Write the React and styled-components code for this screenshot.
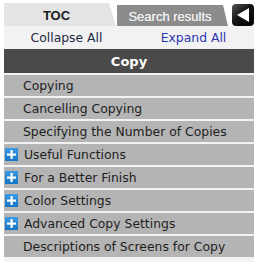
import React from "react";
import styled, { createGlobalStyle } from "styled-components";

const Global = createGlobalStyle`
  html, body { margin: 0; padding: 0; background: #ffffff; }
  body { font-family: "DejaVu Sans", Verdana, sans-serif; }
`;

const Panel = styled.div`
  width: 250px;
  margin: 3px 4px 0 4px;
  display: flex;
  flex-direction: column;
  background: #f3f3f3;
  padding-bottom: 6px;
`;

const TabBar = styled.div`
  display: flex;
  align-items: flex-end;
  height: 23px;
  background: #ffffff;
`;

const Tab = styled.div`
  height: ${(p) => (p.$active ? "23px" : "21px")};
  width: ${(p) => p.$width}px;
  margin-right: ${(p) => p.$gap || 0}px;
  display: flex;
  align-items: center;
  justify-content: center;
  box-sizing: border-box;
  padding-right: ${(p) => p.$slant}px;
  padding-top: 1px;
  background: ${(p) => (p.$active ? "#e4e4e4" : "#8c8c8c")};
  color: ${(p) => (p.$active ? "#1a1a1a" : "#f0f0f0")};
  font-family: "Liberation Sans", Arial, sans-serif;
  font-size: 13px;
  font-weight: ${(p) => (p.$active ? 700 : 400)};
  text-shadow: ${(p) => (p.$active ? "none" : "0 0 0.4px #f0f0f0")};
  clip-path: polygon(0 0, calc(100% - ${(p) => p.$slant}px) 0, 100% 100%, 0 100%);
`;

const BackButton = styled.button`
  margin-left: auto;
  align-self: center;
  width: 22px;
  height: 22px;
  border: none;
  padding: 0;
  border-radius: 4px;
  background: linear-gradient(135deg, #555 0%, #151515 45%, #000 100%);
  display: flex;
  align-items: center;
  justify-content: center;
  cursor: pointer;
`;

const ActionRow = styled.div`
  display: grid;
  grid-template-columns: 1fr 1fr;
  height: 23px;
  align-items: center;
  background: #f2f2f2;
  font-size: 12.4px;
`;

const Action = styled.span`
  text-align: center;
  color: ${(p) => p.$color};
  padding-left: ${(p) => p.$shift || 0}px;
`;

const Header = styled.div`
  height: 24px;
  background: #4a4a4a;
  color: #ffffff;
  font-weight: 700;
  font-size: 13px;
  display: flex;
  align-items: center;
  justify-content: center;
  margin-bottom: 2px;
`;

const List = styled.div`
  display: flex;
  flex-direction: column;
  gap: 2px;
  background: #f3f3f3;
`;

const Row = styled.div`
  height: 21px;
  background: #b4b4b4;
  display: flex;
  align-items: center;
  gap: 6px;
  padding-left: ${(p) => (p.$expandable ? 1 : 19)}px;
  font-size: 12.4px;
  color: #1e1e1e;
  white-space: nowrap;
`;

const PlusBox = styled.span`
  width: 13px;
  height: 13px;
  flex: none;
  background: linear-gradient(180deg, #3a9ae6 0%, #1675c6 100%);
  display: flex;
  align-items: center;
  justify-content: center;
`;

const Plus = () => (
  <PlusBox>
    <svg width="13" height="13" viewBox="0 0 13 13">
      <rect x="5.5" y="2" width="2.2" height="9" fill="#fff" />
      <rect x="2" y="5.5" width="9" height="2.2" fill="#fff" />
    </svg>
  </PlusBox>
);

const items = [
  { label: "Copying" },
  { label: "Cancelling Copying" },
  { label: "Specifying the Number of Copies" },
  { label: "Useful Functions", plus: true },
  { label: "For a Better Finish", plus: true },
  { label: "Color Settings", plus: true },
  { label: "Advanced Copy Settings", plus: true },
  { label: "Descriptions of Screens for Copy" },
];

export default function App() {
  return (
    <>
      <Global />
      <Panel>
        <TabBar>
          <Tab $active $width={112} $slant={7} $gap={1}>TOC</Tab>
          <Tab $width={111} $slant={5}>Search results</Tab>
          <BackButton aria-label="Back">
            <svg width="16" height="16" viewBox="0 0 16 16">
              <polygon points="2,8 14,1 14,15" fill="#ffffff" />
            </svg>
          </BackButton>
        </TabBar>
        <ActionRow>
          <Action $color="#1b2940">Collapse All</Action>
          <Action $color="#2a35b0" $shift={4}>Expand All</Action>
        </ActionRow>
        <Header>Copy</Header>
        <List>
          {items.map((it) => (
            <Row key={it.label} $expandable={it.plus}>
              {it.plus && <Plus />}
              <span>{it.label}</span>
            </Row>
          ))}
        </List>
      </Panel>
    </>
  );
}
